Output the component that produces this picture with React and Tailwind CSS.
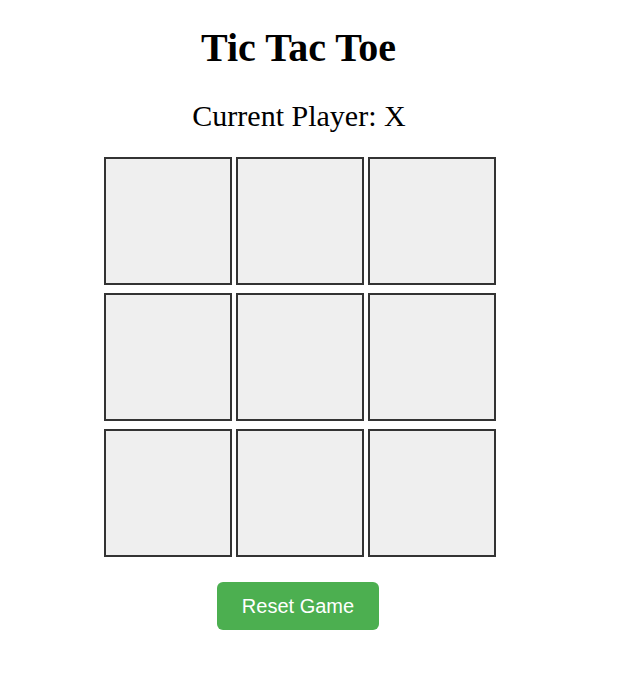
import React, { useState } from "react";

const App = () => {
  const [board, setBoard] = useState(Array(9).fill(null));
  const [player, setPlayer] = useState("X");

  const handleClick = (index) => {
    if (board[index]) return;
    const next = [...board];
    next[index] = player;
    setBoard(next);
    setPlayer(player === "X" ? "O" : "X");
  };

  const resetGame = () => {
    setBoard(Array(9).fill(null));
    setPlayer("X");
  };

  return (
    <div className="min-h-screen bg-white">
      <div className="w-[600px] flex flex-col items-center pt-[26px] font-['Liberation_Serif',serif] text-black">
        <h1 className="mr-[3px] text-[40px] leading-[44px] font-bold">Tic Tac Toe</h1>
        <p className="mt-[29px] mr-[2px] text-[30px] leading-[34px]">Current Player: {player}</p>

        {/* Board */}
        <div className="mt-[24px] grid grid-cols-[repeat(3,128px)] gap-x-1 gap-y-2">
          {board.map((value, index) => (
            <button
              key={index}
              onClick={() => handleClick(index)}
              className="w-[128px] h-[128px] border-2 border-[#333333] bg-[#efefef] text-[48px] font-bold flex items-center justify-center"
            >
              {value}
            </button>
          ))}
        </div>

        <button
          onClick={resetGame}
          className="mt-[25px] mr-[4px] w-[162px] h-[48px] rounded-md bg-[#4caf50] text-white text-[20px] font-['Liberation_Sans',Arial,sans-serif]"
        >
          Reset Game
        </button>
      </div>
    </div>
  );
};

export default App;
